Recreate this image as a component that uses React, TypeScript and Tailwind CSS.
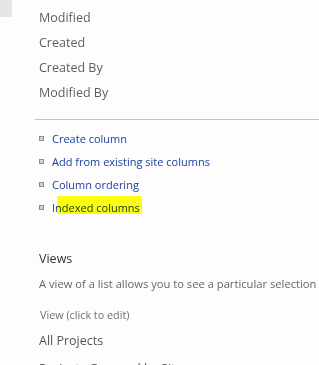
import React from "react";

const fields = ["Modified", "Created", "Created By", "Modified By"];
const links = [
  "Create column",
  "Add from existing site columns",
  "Column ordering",
  "Indexed columns",
];

export default function App() {
  return (
    <div
      className="w-[319px] h-[365px] overflow-hidden bg-[#fdfdfd] flex"
      style={{ fontFamily: '"Open Sans", "Noto Sans", sans-serif' }}
    >
      <div className="w-[12px] shrink-0">
        <div className="h-[17px] w-[12px] bg-[#e6e6e6]" />
      </div>
      <div className="ml-[23px] flex-1 min-w-0">
        <div className="pt-[5px] pl-[4px] text-[12.5px] text-[#5f5f5f]">
          {fields.map((f) => (
            <div key={f} className="h-[25px] leading-[25px] whitespace-nowrap">
              {f}
            </div>
          ))}
        </div>
        <div className="mt-[14px] border-t border-[#c4c4c4]" />
        <div className="pt-[7px] text-[11px] text-[#1d41a0]">
          {links.map((l, i) => (
            <div key={l} className="h-[23px] leading-[23px] flex items-center whitespace-nowrap">
              <span className="ml-[4px] mb-[1px] w-[5px] h-[5px] border border-[#8f8f8f] bg-[#d4d4d4] shrink-0" />
              <span className="ml-[8px] relative">
                {l}
                {i === 3 && (
                  <span className="absolute left-[5px] top-[0px] w-[85px] h-[18px] bg-[#ffff14] mix-blend-multiply rounded-[2px]" />
                )}
              </span>
            </div>
          ))}
        </div>
        <div className="pl-[4px] mt-[27px] whitespace-nowrap">
          <div className="h-[25px] leading-[25px] text-[12.5px] text-[#333333]">Views</div>
          <div className="h-[25px] leading-[25px] text-[11.2px] text-[#666666]">
            A view of a list allows you to see a particular selection
          </div>
          <div className="mt-[6px] h-[25px] leading-[25px] text-[10.8px] text-[#6f6f6f] pl-[1px]">
            View (click to edit)
          </div>
          <div className="mt-[1px] h-[25px] leading-[25px] text-[12.5px] text-[#555555]">
            All Projects
          </div>
          <div className="mt-[3px] h-[25px] leading-[25px] text-[12.5px] text-[#555555]">
            Projects Grouped by Site
          </div>
        </div>
      </div>
    </div>
  );
}
